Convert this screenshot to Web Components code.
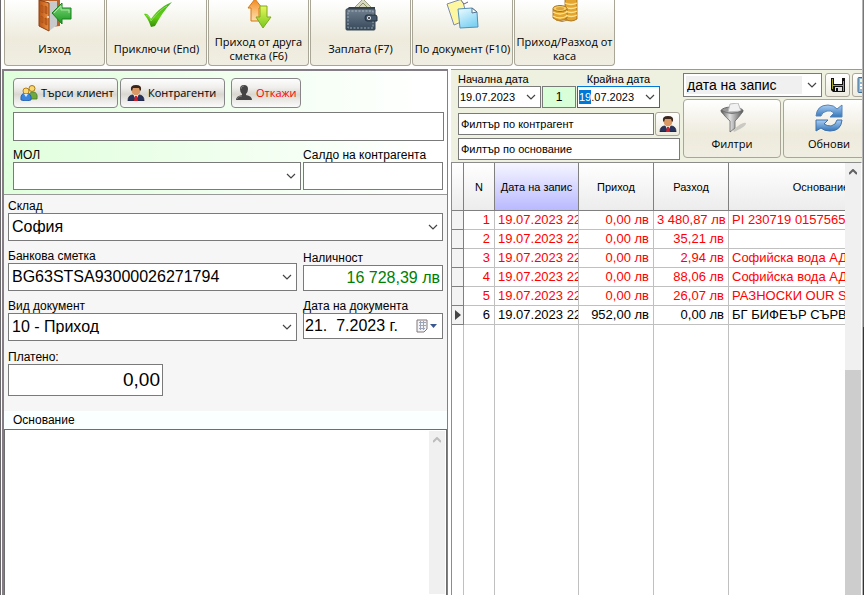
<!DOCTYPE html>
<html lang="bg">
<head>
<meta charset="utf-8">
<title>Каса</title>
<style>
html, body { height: 100%; margin: 0; }
body { overflow: hidden; background: #fff; color: #000; font: 12px/14px "Liberation Sans", Arial, sans-serif; }
</style>
</head>
<body>
<cash-app></cash-app>
<script>
const ICONS = {
  door: `<svg width="36" height="32" viewBox="0 0 36 32"><defs><linearGradient id="a"><stop stop-color="#b85416"/><stop offset="1" stop-color="#ee9140"/></linearGradient><linearGradient id="b" x2="0" y2="1"><stop stop-color="#83dc7c"/><stop offset="1" stop-color="#17941f"/></linearGradient></defs><path d="M2-1h21v27l-9 1z" fill="#b9622c"/><path d="M5 1h15v24l-8 6-7-8z" fill="#e9e9ea"/><path d="M12 31l8-6V1h-8z" fill="#c8c9cb"/><path d="M2 0l10 3v28L2 26z" fill="url(#a)" stroke="#8d4013"/><path d="M4 5l2 1v7l-2-1zm4 1l2 1v7l-2-1zM4 16l2 1v6l-2-1zm4 2l2 1v6l-2-1z" fill="#c76322" stroke="#a14c17" stroke-width=".6"/><circle cx="11" cy="17" r="1" fill="#eee"/><path d="M15 13L25 3v5h9v11h-9v5z" fill="url(#b)" stroke="#16831b"/><path d="M17 13l7-7v4h8v3" fill="none" stroke="#a8e8a2"/></svg>`,
  check: `<svg width="36" height="32" viewBox="0 0 36 32"><defs><linearGradient id="a" x2="0" y2="1"><stop stop-color="#3fae22"/><stop offset=".6" stop-color="#63d013"/><stop offset="1" stop-color="#348d08"/></linearGradient></defs><path d="M5 14c3-1 5 1 7 5C19 9 26 5 33 2 26 9 21 17 16 26l-4 1C10 21 8 18 5 14z" fill="url(#a)"/><path d="M7 15c3 1 4 3 5 6C18 13 23 9 28 6" fill="none" stroke="#8ae052"/></svg>`,
  arrows: `<svg width="36" height="32" viewBox="0 0 36 32"><defs><linearGradient id="a" x2="0" y2="1"><stop stop-color="#f08312"/><stop offset="1" stop-color="#ffc46a" stop-opacity=".5"/></linearGradient><linearGradient id="b" x2="0" y2="1"><stop stop-color="#e9f65d"/><stop offset="1" stop-color="#75c91b"/></linearGradient></defs><path d="M14-1l7 9h-3v13h-8V8H7z" fill="url(#a)" stroke="#d8780f"/><path d="M19 6h7v11h4l-8 11-7-11h4z" fill="url(#b)" stroke="#80a91c"/></svg>`,
  wallet: `<svg width="36" height="32" viewBox="0 0 36 32"><defs><linearGradient id="a" x2="0" y2="1"><stop stop-color="#70808f"/><stop offset="1" stop-color="#35475a"/></linearGradient></defs><path d="M10 9L20-1l10 10z" fill="#d8d9c0" stroke="#9da184"/><path d="M15 8l5-5 5 5" fill="none" stroke="#889461"/><path d="M3 10l3-3h26v3z" fill="#35404a"/><rect x="3" y="9" width="29" height="21" rx="1" fill="url(#a)" stroke="#3b4752"/><rect x="5" y="11" width="25" height="17" fill="none" stroke="#b7c2cc" stroke-width=".8" stroke-dasharray="2 1.5"/><path d="M24 15h8q2 0 2 2v4h-10q-2 0-2-3t2-3z" fill="#44566a" stroke="#242f39"/><circle cx="26" cy="18" r="2" fill="#e8edf1"/><circle cx="26" cy="18" r="1" fill="#222"/></svg>`,
  docs: `<svg width="36" height="32" viewBox="0 0 36 32"><defs><linearGradient id="a" x2=".5" y2="1"><stop stop-color="#f0fcff"/><stop offset="1" stop-color="#7fd2f3"/></linearGradient></defs><path d="M2 4l15-5 6 20-14 6z" fill="#fdf7a2" stroke="#7b8caf"/><path d="M15-1l4 5 4-2" fill="#fff" stroke="#667"/><path d="M13 9l14-1 5 4 1 15-18 1z" fill="url(#a)" stroke="#558fb6"/><path d="M27 8v5l5-1z" fill="#fff" stroke="#557590"/></svg>`,
  coins: `<svg width="36" height="32" viewBox="0 0 36 32"><g fill="#e3a52e" stroke="#9a6414" stroke-width=".8"><path d="M18-1h12v20q-6 4-12 0z"/><path d="M6 9v9q7 5 14 0V9z"/></g><g fill="none" stroke="#ffe18a" stroke-width="1.3"><path d="M18 3q6 3 12 0M18 7q6 3 12 0M19 11q5 3 11 0M19 15q5 3 11 0M6 12q7 4 14 0M6 16q7 4 14 0"/></g><ellipse cx="13" cy="8.500" rx="7" ry="3" fill="#f7cf63" stroke="#a87019"/><ellipse cx="13" cy="8.500" rx="4" ry="1.500" fill="#dea33a"/><path d="M9 20q6 3 12 0" fill="none" stroke="#bd832a"/></svg>`,
  people: `<svg width="18" height="16" viewBox="0 0 18 16"><path d="M9 14q-1-7 4-7t4 7z" fill="#6fa83c" stroke="#477b22" stroke-width=".8"/><circle cx="12" cy="3.500" r="3" fill="#f7d873" stroke="#a67816"/><path d="M1 15q-1-7 5-7t5 7q-5 2-10 0z" fill="#3b85dd" stroke="#1e58a3" stroke-width=".8"/><circle cx="6" cy="6" r="3" fill="#f8da79" stroke="#b67d13"/><path d="M4 9l2 3 2-3" fill="#dceaff"/></svg>`,
  man: `<svg width="18" height="16" viewBox="0 0 18 16"><path d="M1 16q0-6 5-6h6q5 0 5 6z" fill="#29345c" stroke="#171d37" stroke-width=".8"/><path d="M6 9l3 6 3-6z" fill="#fff"/><path d="M8 11h2l1 5H7z" fill="#cf1f2b"/><path d="M5 3h8q1 4-1 6-3 3-6 0-2-2-1-6z" fill="#d99964"/><path d="M4 5Q3 0 9 0t5 5l-1 1-1-3q-4 0-6 0L5 6z" fill="#3c261b"/></svg>`,
  shade: `<svg width="18" height="16" viewBox="0 0 18 16"><path d="M5 4q0-4 4-4t4 4q0 3-2 5v1q6 1 6 5H1q0-4 6-5V9Q5 7 5 4z" fill="#444"/><path d="M6 4q0-3 3-3M2 14q1-3 5-3" fill="none" stroke="#777"/></svg>`,
  save: `<svg width="16" height="16" viewBox="0 0 16 16"><path d="M1 1h14v14H3l-2-2z" fill="#111"/><path d="M2 2h1v10H2zM13 4h1v10h-1z" fill="#a4a326"/><path d="M4 1h8v6H4z" fill="#fff"/><path d="M3 8h10v1H3z" fill="#a4a326"/><path d="M5 10h7v4H5z" fill="#ddd"/><path d="M6 11h2v3H6z" fill="#111"/></svg>`,
  calc: `<svg width="16" height="16" viewBox="0 0 16 16"><rect x="1" y=".5" width="13" height="15" rx="1" fill="#8fb7d6" stroke="#3d6b91"/><path d="M3 2h9v3H3z" fill="#e5f6d4"/><path d="M3 7h2v2H3zm3 0h2v2H6zm3 0h2v2H9zm-6 3h2v2H3zm3 0h2v2H6zm3 0h2v2H9z" fill="#fff"/></svg>`,
  funnel: `<svg width="32" height="32" viewBox="0 0 32 32"><defs><linearGradient id="a"><stop stop-color="#555"/><stop offset=".4" stop-color="#e2e2e2"/><stop offset="1" stop-color="#555"/></linearGradient></defs><path d="M17 27q10-9 13-7 1 3-12 9z" fill="#999" opacity=".45"/><ellipse cx="16" cy="8" rx="11" ry="4" fill="#999" stroke="#666"/><path d="M12 9l2-8 8-1 3 8z" fill="#f1f1f1" stroke="#bbb"/><path d="M5 7q11 7 22 0-1 4-8 11v7l-5 4V18Q6 11 5 7z" fill="url(#a)" stroke="#666" stroke-width=".8"/></svg>`,
  refresh: `<svg width="32" height="32" viewBox="0 0 32 32"><defs><linearGradient id="a" x2="0" y2="1"><stop stop-color="#a9cdf3"/><stop offset="1" stop-color="#3475b9"/></linearGradient></defs><path d="M3 13Q4 2 15 2q6 0 9 4l5-4v12H17l4-4q-3-3-7-2-5 1-6 5z" fill="url(#a)" stroke="#5484b9"/><path d="M29 17q-1 11-12 11-6 0-9-3l-5 3V17h12l-4 4q3 2 7 2 5-1 6-6z" fill="url(#a)" stroke="#3e71aa"/></svg>`,
  calendar: `<svg width="22" height="14" viewBox="0 0 22 14"><path d="M1 1h10v9l-3 3H1z" fill="#f4f4f7" stroke="#81777a"/><path d="M3 3.500h7M3 6.500h7M3 9.500h6M4.500 2v9M7.500 2v9" stroke="#9ba5ba"/><path d="M14 5h7l-3.500 4z" fill="#3b5792"/></svg>`,
  down: `<svg width="10" height="6" viewBox="0 0 10 6"><path d="M1 1l4 4 4-4" fill="none" stroke="#444" stroke-width="1.200"/></svg>`,
  up: `<svg width="8" height="6" viewBox="0 0 8 6"><path d="M0 5l4-4 4 4" fill="none" stroke="currentColor" stroke-width="2"/></svg>`
};

const BASE = `*{box-sizing:border-box}svg{display:block;flex:none}button,input,select,textarea{font:inherit;color:inherit;margin:0;border-radius:0;outline:none}`;

/* Base class: renders the markup of a component into its shadow root. */
class Part extends HTMLElement {
  connectedCallback() {
    if (this.shadowRoot) return;
    this.attachShadow({ mode: 'open' }).innerHTML = `<style>${BASE}${this.css()}</style>${this.html()}`;
    this.ready();
  }
  get(name, other = '') { return this.getAttribute(name) ?? other; }
  ready() {}
}

customElements.define('tool-button', class extends Part {
  css() { return `:host{display:block;flex:none;width:var(--tool-width,101px)}
    button{width:100%;height:100%;padding:var(--tool-pad,0);border:1px solid #a9a597;border-top-width:var(--tool-top,0);border-radius:var(--tool-radius,0 0 4px 4px);
      background:linear-gradient(#fff 0,#f7f6f0 25%,#eeebdd 60%,#f0eee2);display:flex;flex-direction:column;align-items:center;
      font:11px/14px "Open Sans","Noto Sans",sans-serif}
    span{flex:1;display:flex;align-items:center;justify-content:center;text-align:center;white-space:nowrap}`; }
  html() { return `<button type="button">${ICONS[this.get('icon')]}<span><slot></slot></span></button>`; }
});

customElements.define('small-button', class extends Part {
  css() { return `:host{display:block;flex:none}
    button{width:100%;height:30px;padding:0 6px;border:1px solid #89868a;border-radius:4px;display:flex;align-items:center;gap:3px;
      background:linear-gradient(#fdfdfd,#f0efed 30%,#d9d7d0 55%,#eeedeb 80%,#fbfbfb);font:11px/14px "Open Sans","Noto Sans",sans-serif;white-space:nowrap}
    :host([danger]) button{color:#f00;padding:0 3px}`; }
  html() { return `<button type="button">${ICONS[this.get('icon')]}<slot></slot></button>`; }
});

customElements.define('icon-button', class extends Part {
  css() { return `:host{display:block;flex:none}
    button{width:25px;height:24px;padding:0;border:1px solid #aaa69a;border-radius:3px;display:flex;align-items:center;justify-content:center;background:linear-gradient(#fff,#eeecdf)}`; }
  html() { return `<button type="button" aria-label="${this.get('name')}">${ICONS[this.get('icon')]}</button>`; }
});

customElements.define('text-field', class extends Part {
  css() { return `:host{display:block;min-width:0}
    label{display:block;height:14px;white-space:nowrap}
    input{display:block;width:100%;height:var(--h,28px);border:1px solid #7a7a7a;padding:var(--pad,0 2px);background:var(--bg,#fff);
      font-size:var(--size,12px);text-align:var(--align,left);color:var(--ink,#000)}`; }
  html() { return `${this.get('label') && `<label for="f">${this.get('label')}</label>`}
    <input id="f" type="text" value="${this.get('value')}" ${this.get('label') ? '' : `aria-label="${this.get('name')}"`}>`; }
});

customElements.define('select-field', class extends Part {
  css() { return `:host{display:block;min-width:0}
    label{display:block;height:14px}
    div{display:grid;align-items:center;height:var(--h,28px);border:1px solid #7a7a7a;background:#fff}
    select{grid-area:1/1;appearance:none;border:0;background:var(--select-bg,transparent);width:100%;height:100%;padding:0 20px 0 3px;font-size:var(--size,16px)}
    svg{grid-area:1/1;justify-self:end;margin-right:4px;pointer-events:none}`; }
  html() { return `${this.get('label') && `<label for="s">${this.get('label')}</label>`}
    <div><select id="s" ${this.get('label') ? '' : `aria-label="${this.get('name')}"`}><option>${this.get('value')}</option></select>${ICONS.down}</div>`; }
});

customElements.define('date-field', class extends Part {
  css() { return `:host{display:block;min-width:0}
    label{display:block;height:14px;white-space:nowrap;font-size:var(--label-size,12px);text-align:var(--label-align,left)}
    div{display:flex;height:var(--h,22px);border:1px solid #7a7a7a;background:#fff}
    div:focus-within{border-color:#0078d7}
    input{flex:1;width:0;min-width:0;border:0;padding:0 0 0 1px;background:transparent;font-size:var(--size,11px)}
    input::selection{background:#0078d7;color:#fff}
    button{flex:none;border:0;background:none;padding:0 4px 0 0;display:flex;align-items:center}`; }
  html() { return `<label for="d">${this.get('label')}</label>
    <div><input id="d" type="text" value="${this.get('value')}"><button type="button" aria-label="Избор на дата">${ICONS[this.get('icon', 'down')]}</button></div>`; }
  ready() {
    if (!this.hasAttribute('selected')) return;
    const input = this.shadowRoot.querySelector('input');
    input.focus();
    input.setSelectionRange(0, 2);
  }
});

customElements.define('scroll-rail', class extends Part {
  css() { return `:host{display:flex;flex:none;flex-direction:column;align-items:center;width:16px;background:#f0f0f0;color:var(--arrow,#606060)}
    svg{margin-top:6px}
    i{display:none;width:100%;flex:1;background:#cdcdcd}
    :host([thumb]) i{display:block;margin-top:195px}`; }
  html() { return `${ICONS.up}<i></i>`; }
});

customElements.define('records-grid', class extends Part {
  css() { return `:host{display:flex;flex:1;min-height:0;border-left:1px solid #8c8c8c;border-top:1px solid #8c8c8c;border-right:1px solid #fff;background:#fff}
    div{flex:1;min-width:0;overflow:hidden}
    table{table-layout:fixed;width:462px;height:100%;border-collapse:separate;border-spacing:0;font-size:13px;line-height:18px}
    th,td{border-right:1px solid #c0c0c0;border-bottom:1px solid #c0c0c0;padding:0 4px 0 3px;overflow:hidden;white-space:nowrap;text-align:right;height:19px}
    th{height:48px;border-color:#808080;font-size:11px;font-weight:400;text-align:center;background:linear-gradient(#fff,#ececec);padding:0}
    th.on{background:linear-gradient(#f6f6ff,#b9b9ff)}
    td:nth-child(3),td:nth-child(6){text-align:left}
    td:nth-child(3){padding-right:0}
    td:first-child{background:#f3f3f3;border-color:#808080;padding:0 0 0 3px}
    tr{color:#f00} tr.now,thead tr{color:#000}
    tr.rest td{height:auto;border-bottom:0}
    tr.rest td:first-child{background:#fff;border-color:#c0c0c0}`; }
  html() {
    const rows = [
      ['1', '19.07.2023 22', '0,00 лв', '3 480,87 лв', 'PI 230719 0157565'],
      ['2', '19.07.2023 22', '0,00 лв', '35,21 лв', ''],
      ['3', '19.07.2023 22', '0,00 лв', '2,94 лв', 'Софийска вода АД'],
      ['4', '19.07.2023 22', '0,00 лв', '88,06 лв', 'Софийска вода АД'],
      ['5', '19.07.2023 22', '0,00 лв', '26,07 лв', 'РАЗНОСКИ OUR S'],
      ['6', '19.07.2023 22', '952,00 лв', '0,00 лв', 'БГ БИФЕЪР СЪРВ']
    ];
    const mark = '<svg width="6" height="10" viewBox="0 0 6 10"><path d="M0 0l6 5-6 5z" fill="#444"/></svg>';
    return `<div><table><colgroup><col style="width:12px"><col style="width:31px"><col style="width:84px"><col style="width:75px"><col style="width:75px"><col></colgroup>
      <thead><tr><th></th><th>N</th><th class="on">Дата на запис</th><th>Приход</th><th>Разход</th><th>Основание</th></tr></thead>
      <tbody>${rows.map((r, i) => `<tr class="${i === 5 ? 'now' : ''}"><td>${i === 5 ? mark : ''}</td>${r.map(c => `<td>${c}</td>`).join('')}</tr>`).join('')}
      <tr class="rest">${'<td></td>'.repeat(6)}</tr></tbody></table></div><scroll-rail thumb></scroll-rail>`;
  }
});

customElements.define('client-panel', class extends Part {
  css() { return `:host{display:block;padding:7px 3px 4px 9px;border-bottom:1px solid #999;background:linear-gradient(90deg,#e0ffdc,#fff 95%)}
    .row{display:flex;gap:2px;margin-bottom:4px}
    .wide{width:105px}.end{width:70px;margin-left:4px}
    .find{--h:29px;margin-bottom:7px}
    .pair{display:grid;grid-template-columns:288fr 140fr;gap:2px;padding-right:1px}`; }
  html() { return `<div class="row"><small-button class="wide" icon="people">Търси клиент</small-button><small-button class="wide" icon="man">Контрагенти</small-button><small-button class="end" icon="shade" danger>Откажи</small-button></div>
    <text-field class="find" name="Клиент"></text-field>
    <div class="pair"><select-field label="МОЛ" value=""></select-field><text-field label="Салдо на контрагента"></text-field></div>`; }
});

customElements.define('payment-form', class extends Part {
  css() { return `:host{display:grid;grid-template-columns:289fr 140fr;gap:8px 6px;align-items:end;padding:4px 4px 15px;background:#f6f6f6}
    .all{grid-column:1/-1}
    .cash{--h:26px;--size:16px;--align:right;--ink:#008000}
    .date{--h:26px;--size:16px;align-self:start}
    .paid{--h:32px;--size:19px;--align:right;width:155px;padding-top:1px}`; }
  html() { return `<select-field class="all" label="Склад" value="София"></select-field>
    <select-field label="Банкова сметка" value="BG63STSA93000026271794"></select-field>
    <text-field class="cash" label="Наличност" value="16 728,39 лв"></text-field>
    <select-field label="Вид документ" value="10 - Приход"></select-field>
    <date-field class="date" label="Дата на документа" value="21.  7.2023 г." icon="calendar"></date-field>
    <text-field class="paid" label="Платено:" value="0,00"></text-field>`; }
});

customElements.define('reason-box', class extends Part {
  css() { return `:host{display:flex;flex:1;min-height:0;flex-direction:column;background:#faffff}
    label{padding:2px 9px;height:18px}
    div{flex:1;display:flex;min-height:0;border:1px solid #6e6e6e;border-bottom:0;background:#fff;padding:1px}
    textarea{flex:1;min-width:0;border:0;resize:none;background:none}
    scroll-rail{--arrow:#bdbdbd}`; }
  html() { return `<label for="t">Основание</label><div><textarea id="t"></textarea><scroll-rail></scroll-rail></div>`; }
});

customElements.define('filter-bar', class extends Part {
  css() { return `:host{display:flex;gap:3px;height:92px;padding-left:7px;background:#eef0e0;overflow:hidden}
    .left{flex:none;width:222px;padding-top:2px}
    .dates{display:flex;gap:1px;align-items:end;margin-bottom:4px;--label-size:11px}
    .date{width:83px}
    .until{--label-align:center}
    .count{width:34px;--h:22px;--bg:#d9ffd9;--align:center}
    .line{display:flex;gap:1px;margin-bottom:2px;align-items:center}
    .line text-field{flex:1;--h:22px;--size:11px}
    .right{flex:1;min-width:0;padding-top:3px}
    .tools{display:flex;gap:2px;margin-bottom:2px}
    .sort{flex:none;width:139px;--h:24px;--size:14px;--select-bg:linear-gradient(#f0f0f0,#f0f0f0) 2px 2px/116px 18px no-repeat;margin-right:1px}
    .big{display:flex;gap:2px;height:59px;--tool-width:98px;--tool-top:1px;--tool-radius:4px;--tool-pad:3px 0 5px}
    .next{--tool-width:92px}`; }
  html() { return `<div class="left"><div class="dates"><date-field class="date" label="Начална дата" value="19.07.2023"></date-field>
      <text-field class="count" name="Дни" value="1"></text-field>
      <date-field class="date until" label="Крайна дата" value="19.07.2023" selected></date-field></div>
      <div class="line"><text-field name="Филтър по контрагент" value="Филтър по контрагент"></text-field><icon-button icon="man" name="Избор на контрагент"></icon-button></div>
      <div class="line"><text-field name="Филтър по основание" value="Филтър по основание"></text-field></div></div>
    <div class="right"><div class="tools"><select-field class="sort" name="Подредба" value="дата на запис"></select-field><icon-button icon="save" name="Запис"></icon-button><icon-button icon="calc" name="Калкулатор"></icon-button></div>
      <div class="big"><tool-button icon="funnel">Филтри</tool-button><tool-button class="next" icon="refresh">Обнови</tool-button></div></div>`; }
});

customElements.define('cash-app', class extends Part {
  css() { return `:host{display:flex;flex-direction:column;height:100vh;overflow:hidden;border-left:1px solid #6a676a;padding:0 2px 0 1px;box-sizing:border-box;
      background:linear-gradient(#777 55%,#24364a 55%) right/1px 100% no-repeat,linear-gradient(#b5b5b5,#b5b5b5) right/2px 100% no-repeat}
    nav{display:flex;gap:1px;height:66px;padding-left:2px;margin-bottom:3px;flex:none}
    main{flex:1;min-height:0;display:grid;grid-template:minmax(0,1fr)/446fr 411fr;gap:3px}
    section{display:flex;flex-direction:column;min-width:0;min-height:0}
    .in{border:solid #857f85;border-width:2px 1px 0 2px}
    .out{border-top:1px solid #999}`; }
  html() { return `<nav><tool-button icon="door">Изход</tool-button><tool-button icon="check">Приключи (End)</tool-button>
      <tool-button icon="arrows">Приход от друга<br>сметка (F6)</tool-button><tool-button icon="wallet">Заплата (F7)</tool-button>
      <tool-button icon="docs">По документ (F10)</tool-button><tool-button icon="coins">Приход/Разход от<br>каса</tool-button></nav>
    <main><section class="in"><client-panel></client-panel><payment-form></payment-form><reason-box></reason-box></section>
      <section class="out"><filter-bar></filter-bar><records-grid></records-grid></section></main>`; }
});
</script>
</body>
</html>
